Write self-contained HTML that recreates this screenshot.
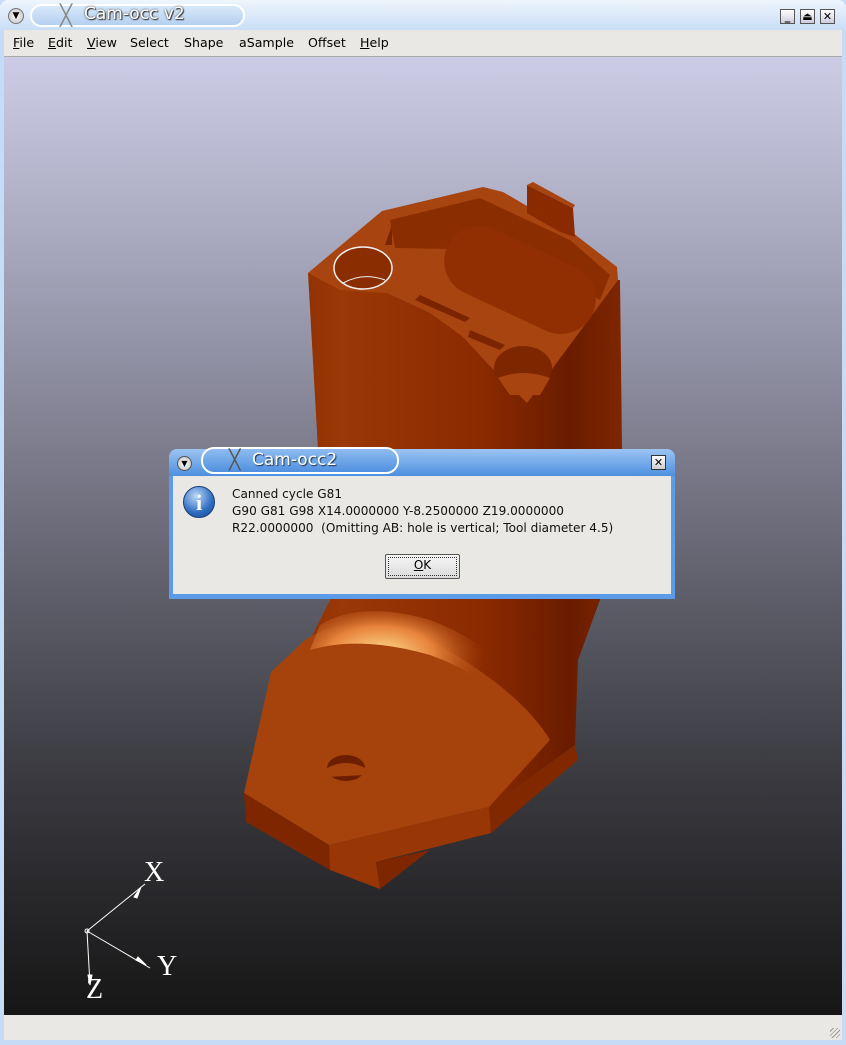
<!DOCTYPE html>
<html><head><style>
*{margin:0;padding:0;box-sizing:border-box}
body{width:846px;height:1045px;overflow:hidden;background:#c6dcf6;font-family:"DejaVu Sans","Liberation Sans",sans-serif;font-size:13px;position:relative}
.tb{position:absolute;left:0;top:0;width:846px;height:30px;background:linear-gradient(#eef5fd,#c9def6);border-radius:8px 8px 0 0}
.pill{position:absolute;left:30px;top:4px;width:215px;height:23px;border:2px solid #fff;border-radius:12px;background:linear-gradient(#d8e8fa,#b5d0f0)}
.ttl{position:absolute;left:84px;top:4px;font-size:17px;color:#fff;text-shadow:0 0 2px #333,1px 1px 1px #333}
.menu{position:absolute;left:4px;top:30px;width:838px;height:27px;background:#eae8e4;border-bottom:1px solid #aaa}
.menu span{position:absolute;top:5px;font-size:12.6px;color:#000}
.view{position:absolute;left:4px;top:57px;width:838px;height:958px;background:linear-gradient(#cccce6 0%,#9d9db2 25%,#6a6a78 50%,#3a3a40 75%,#161616 100%);overflow:hidden}
.status{position:absolute;left:4px;top:1015px;width:838px;height:25px;background:#eae8e4}
.btn{position:absolute;top:9px;width:15px;height:15px;border:1px solid #555;background:linear-gradient(#fff,#ccd);font-size:11px;line-height:13px;text-align:center;font-weight:bold}
.dlg{position:absolute;left:169px;top:449px;width:506px;height:150px;background:#5b9be8;border-radius:8px 8px 0 0}
.dtb{position:absolute;left:0;top:0;width:506px;height:27px;background:linear-gradient(#9cc4f2,#4d8fe0);border-radius:8px 8px 0 0}
.dpill{position:absolute;left:32px;top:-2px;width:198px;height:27px;border:2px solid #fff;border-radius:13px;background:linear-gradient(#8fbcf0,#4f90e0)}
.dbody{position:absolute;left:4px;top:27px;width:498px;height:118px;background:#eae8e4}
.dtxt{position:absolute;left:59px;top:10px;font-size:12.1px;line-height:17px;color:#111}
.ok{position:absolute;left:212px;top:78px;width:75px;height:25px;border:1px solid #555;border-radius:2px;background:linear-gradient(#f6f6f6,#dcdcdc);text-align:center;line-height:21px;font-size:12px}
.ok i{position:absolute;left:2px;top:2px;right:2px;bottom:2px;border:1px dotted #333}
</style></head><body>
<div class="tb">
 <div style="position:absolute;left:8px;top:8px;width:16px;height:16px;border-radius:50%;background:radial-gradient(#fff,#bbb);border:1px solid #777;font-size:9px;text-align:center;line-height:14px">▼</div>
 <div class="pill"></div>
 <div style="position:absolute;left:60px;top:3px;font-size:20px;color:#888">╳</div>
 <div class="ttl">Cam-occ v2</div>
 <div class="btn" style="left:780px">_</div><div class="btn" style="left:800px">⏏</div><div class="btn" style="left:820px">✕</div>
</div>
<div class="menu">
 <span style="left:9px"><u>F</u>ile</span><span style="left:44px"><u>E</u>dit</span><span style="left:83px"><u>V</u>iew</span><span style="left:126px">Select</span><span style="left:180px">Shape</span><span style="left:235px">aSample</span><span style="left:304px">Offset</span><span style="left:356px"><u>H</u>elp</span>
</div>
<div class="view">
<svg width="838" height="958" viewBox="4 57 838 958" style="position:absolute;left:0;top:0">
<defs>
<linearGradient id="col" x1="0" x2="1"><stop offset="0" stop-color="#8a2c00"/><stop offset=".2" stop-color="#9a3806"/><stop offset=".6" stop-color="#8a2a00"/><stop offset=".85" stop-color="#6a1c00"/><stop offset="1" stop-color="#7e2600"/></linearGradient>
<radialGradient id="hl" cx=".3" cy=".35" r=".45"><stop offset="0" stop-color="#ffe090"/><stop offset=".5" stop-color="#e8843c"/><stop offset="1" stop-color="#a84410" stop-opacity="0"/></radialGradient>
</defs>
<path d="M308,273 L620,280 L622,450 L600,600 L578,660 L575,745 L489,807 L300,700 L271,672 L310,640 L330,600 L318,450 Z" fill="url(#col)"/>
<path d="M271,672 L305,640 Q350,610 430,640 Q520,690 550,740 L489,807 L329,845 L244,793 Z" fill="#a6420c"/>
<path d="M320,625 Q360,600 430,620 Q510,650 545,720 L530,735 Q500,680 430,655 Q360,635 310,650 Z" fill="url(#hl)"/>
<path d="M244,793 L329,845 L330,870 L246,822 Z" fill="#7e2600"/>
<path d="M329,845 L489,807 L491,833 L376,862 L380,889 L330,870 Z" fill="#983606"/>
<path d="M489,807 L575,745 L578,760 L491,833 Z" fill="#822800"/>
<path d="M376,862 L430,850 L380,889 Z" fill="#7e2600"/>
<ellipse cx="346" cy="768" rx="19" ry="13" fill="#6e1e00"/>
<path d="M327,768 Q346,758 365,768 L365,775 L327,777Z" fill="#a6420c"/>
<path d="M308,273 L382,211 L483,187 L503,192 L573,233 L617,267 L618,280 L527,403 L487,363 L463,337 L430,313 L387,293 L340,290 Z" fill="#a84410"/>
<path d="M390,220 L480,198 L570,240 L610,275 L600,300 L520,250 L395,248 Z" fill="#8a2e02"/>
<path d="M385,245 L392,225 L392,245Z" fill="#7a2400"/>
<rect x="440" y="245" width="160" height="70" rx="35" transform="rotate(25 520 280)" fill="#922f02"/>
<path d="M420,295 L470,318 L465,322 L415,300Z" fill="#7a2400"/>
<path d="M470,330 L505,345 L500,350 L468,337Z" fill="#7a2400"/>
<ellipse cx="523" cy="368" rx="29" ry="22" fill="#7e2600"/>
<path d="M498,378 Q523,368 550,378 L540,395 L510,395Z" fill="#a84410"/>
<ellipse cx="363" cy="268" rx="29" ry="21" fill="#8a2e02" stroke="#eee" stroke-width="1.5"/>
<path d="M343,283 Q363,272 385,280" stroke="#eee" fill="none"/>
<path d="M527,185 L573,208 L575,237 L560,232 L527,213 Z" fill="#8a2a00"/>
<path d="M527,185 L533,182 L575,205 L573,208Z" fill="#a84410"/>
<g stroke="#fff" fill="#fff" stroke-width="1">
<line x1="87" y1="931" x2="145" y2="884"/><line x1="87" y1="931" x2="150" y2="968"/><line x1="87" y1="931" x2="90" y2="985"/>
<circle cx="87" cy="931" r="2" fill="none"/>
<path d="M141,887 L134,897 L137,898Z"/><path d="M146,965 L138,957 L136,960Z"/><path d="M90,985 L88,975 L92,975Z"/>
</g>
<g fill="#fff" font-family="Liberation Serif,serif" font-size="28"><text x="144" y="881">X</text><text x="157" y="975">Y</text><text x="86" y="998">Z</text></g>
</svg>
</div>
<div class="status"><div style="position:absolute;right:2px;bottom:2px;width:10px;height:10px;background:repeating-linear-gradient(135deg,transparent 0 2px,#999 2px 3px)"></div></div>
<div class="dlg">
 <div class="dtb"></div>
 <div style="position:absolute;left:8px;top:7px;width:15px;height:15px;border-radius:50%;background:radial-gradient(#fff,#bbb);border:1px solid #555;font-size:8px;text-align:center;line-height:13px">▼</div>
 <div class="dpill"></div>
 <div style="position:absolute;left:60px;top:0;font-size:19px;color:#555">╳</div>
 <div style="position:absolute;left:83px;top:1px;font-size:17px;color:#fff;text-shadow:1px 1px 1px #234">Cam-occ2</div>
 <div style="position:absolute;left:482px;top:6px;width:15px;height:15px;border:1px solid #333;background:linear-gradient(#fff,#ccc);font-size:11px;font-weight:bold;line-height:13px;text-align:center">✕</div>
 <div class="dbody">
  <div style="position:absolute;left:10px;top:10px;width:32px;height:32px;border-radius:50%;background:radial-gradient(circle at 40% 30%,#bcd8f8,#2f6cc0 60%,#1a4a90);border:1px solid #1a3f7a;color:#fff;font:bold 22px 'Liberation Serif',serif;text-align:center;line-height:31px">i</div>
  <div class="dtxt">Canned cycle G81<br>G90 G81 G98 X14.0000000 Y-8.2500000 Z19.0000000<br>R22.0000000&nbsp; (Omitting AB: hole is vertical; Tool diameter 4.5)</div>
  <div class="ok"><i></i><u>O</u>K</div>
 </div>
</div>
</body></html>
